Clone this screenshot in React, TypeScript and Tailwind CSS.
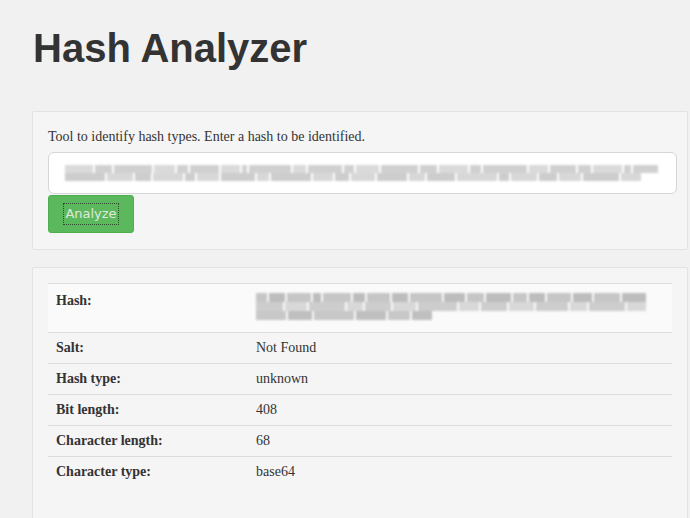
import React from "react";

const serif = { fontFamily: '"Liberation Serif", "Times New Roman", serif' };

function Blur({ w, shade = "#c9c9c9", h = 7 }: { w: number; shade?: string; h?: number }) {
  return <span className="inline-block mr-[2px]" style={{ width: w, height: h, background: shade }} />;
}

const inputRow1 = [30, 18, 40, 22, 12, 30, 20, 6, 44, 14, 36, 10, 24, 40, 18, 30, 12, 46, 20, 28, 14, 30, 8, 26];
const inputRow2 = [40, 26, 16, 30, 10, 22, 34, 12, 40, 20, 14, 24, 30, 16, 28, 40, 10, 26, 18, 22, 36, 20];

export default function App() {
  const rows: [string, string][] = [
    ["Salt:", "Not Found"],
    ["Hash type:", "unknown"],
    ["Bit length:", "408"],
    ["Character length:", "68"],
    ["Character type:", "base64"],
  ];
  return (
    <div className="w-[690px] h-[518px] overflow-hidden bg-[#f1f1f1] pl-[32px] pr-[2px]" style={serif}>
      <h1
        className="pt-[22px] pl-[1px] text-[40px] font-bold leading-[52px] text-[#333333] h-[87px]"
        style={{ fontFamily: '"Liberation Sans", Arial, sans-serif' }}
      >
        Hash Analyzer
      </h1>
      <div className="mt-[24px] bg-[#f5f5f5] border border-[#e3e3e3] rounded-[2px] pl-[15px] pr-[10px] pt-[15px] pb-[16px]">
        <p className="text-[14px] leading-[20px] text-[#333]">Tool to identify hash types. Enter a hash to be identified.</p>
        <div className="mt-[5px] h-[42px] bg-white border border-[#d6d6d6] rounded-[6px] flex flex-col justify-center pl-[16px] pr-[16px] overflow-hidden">
          <div className="blur-[0.8px] opacity-90">
            <div className="flex">
              {inputRow1.map((w, i) => (
                <Blur key={i} w={w} h={8} shade={i % 3 === 0 ? "#d6d6d6" : "#cccccc"} />
              ))}
            </div>
            <div className="flex">
              {inputRow2.map((w, i) => (
                <Blur key={i} w={w} h={8} shade={i % 2 === 0 ? "#c8c8c8" : "#d4d4d4"} />
              ))}
            </div>
          </div>
        </div>
        <button
          className="mt-[1px] w-[86px] h-[38px] bg-[#5cb85c] border border-[#4cae4c] rounded-[3px] text-[#dfe9df] text-[13px] flex items-center justify-center"
          style={{ fontFamily: '"DejaVu Sans", sans-serif' }}
        >
          <span className="outline-1 outline-dotted outline-[#2e4a2e] px-[1px]">Analyze</span>
        </button>
      </div>
      <div className="mt-[17px] bg-[#f5f5f5] border border-[#e3e3e3] rounded-[2px] px-[15px] pt-[15px] h-[260px]">
        <table className="w-full table-fixed text-[14px] text-[#333] border-collapse">
          <colgroup>
            <col className="w-[208px]" />
            <col />
          </colgroup>
          <tbody>
            <tr className="border-t border-[#dddddd] bg-[#fafafa]">
              <td className="align-top pt-[7px] pl-[8px] font-bold leading-[20px] h-[49px]">Hash:</td>
              <td className="align-top pt-[9px] pr-[24px]">
                <div className="blur-[0.8px]">
                  <div className="flex">
                    {[14, 20, 30, 10, 34, 16, 28, 20, 40, 26, 22, 30, 18, 20, 30, 24, 32, 30].map((w, i) => (
                      <Blur key={i} w={w} h={9} shade={i % 2 ? "#bdbdbd" : "#c6c6c6"} />
                    ))}
                  </div>
                  <div className="flex">
                    {[30, 26, 40, 18, 30, 26, 44, 22, 30, 28, 36, 20, 40, 22].map((w, i) => (
                      <Blur key={i} w={w} h={9} shade={i % 2 ? "#d8d8d8" : "#cdcdcd"} />
                    ))}
                  </div>
                  <div className="flex">
                    {[30, 24, 40, 30, 22, 20].map((w, i) => (
                      <Blur key={i} w={w} h={9} shade={i % 2 ? "#bfbfbf" : "#c8c8c8"} />
                    ))}
                  </div>
                </div>
              </td>
            </tr>
            {rows.map(([k, v]) => (
              <tr key={k} className="border-t border-[#dddddd]">
                <td className="pl-[8px] font-bold h-[31px] leading-[20px]">{k}</td>
                <td className="leading-[20px]">{v}</td>
              </tr>
            ))}
          </tbody>
        </table>
      </div>
    </div>
  );
}
